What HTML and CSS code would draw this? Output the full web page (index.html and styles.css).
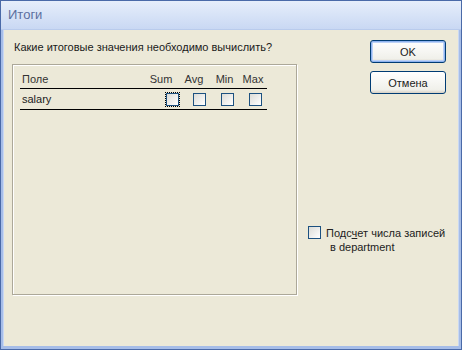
FILE: index.html
```html
<!DOCTYPE html>
<html lang="ru">
<head>
  <meta charset="UTF-8" />
  <title>Итоги</title>
  <link rel="stylesheet" href="styles.css">
</head>
<body>
  <div class="window">
    <div class="titlebar">Итоги</div>
    <div class="client">
      <div class="main">
        <p class="prompt">Какие итоговые значения необходимо вычислить?</p>
        <div class="panel">
          <div class="grid head">
            <span class="field">Поле</span>
            <span>Sum</span>
            <span>Avg</span>
            <span>Min</span>
            <span>Max</span>
          </div>
          <div class="grid row">
            <span class="field">salary</span>
            <span><i class="check focus"></i></span>
            <span><i class="check"></i></span>
            <span><i class="check"></i></span>
            <span><i class="check"></i></span>
          </div>
        </div>
      </div>
      <div class="side">
        <button class="btn default">OK</button>
        <button class="btn">Отмена</button>
        <label class="count">
          <i class="check"></i>
          <span>Подс<u>ч</u>ет числа записей<br><span class="indent">в department</span></span>
        </label>
      </div>
    </div>
  </div>
</body>
</html>
```

FILE: styles.css
```css
body {
  margin: 0;
  padding: 0;
  font-family: 'Liberation Sans', Arial, sans-serif;
  font-size: 11px;
  color: #000;
  background: #ece9d8;
}

.window {
  width: 462px;
  height: 350px;
  box-sizing: border-box;
  display: flex;
  flex-direction: column;
  background: #ece9d8;
  border: 3px solid #a6bde8;
  border-top: none;
  border-bottom: 4px solid #a6bde8;
  box-shadow: inset 1px 0 0 #c9d8f3, inset -1px 0 0 #c9d8f3;
  outline: 1px solid #4a6aa8;
  outline-offset: -1px;
}

.titlebar {
  height: 29px;
  margin: 0 -3px;
  padding-left: 8px;
  line-height: 30px;
  font-size: 13px;
  color: #5b6f9e;
  background: linear-gradient(to bottom, #e7effb, #c9d8f3);
  border-bottom: 1px solid #b9cbec;
}

.client {
  flex: 1;
  display: flex;
  padding: 10px 0 0 9px;
}

.main {
  width: 285px;
}

.prompt {
  margin: 1px 0 10px 2px;
  font-size: 11px;
  line-height: 13px;
  color: #1a1a1a;
}

.panel {
  height: 231px;
  box-sizing: border-box;
  border: 1px solid #aca899;
  box-shadow: inset 1px 1px 0 #fff, 1px 1px 0 #fff;
  padding: 5px 0 0 7px;
}

.grid {
  width: 247px;
  display: grid;
  align-items: center;
  border-bottom: 1px solid #000;
  color: #222;
}

.head {
  height: 18px;
  grid-template-columns: 124px 34px 32px 29px 28px;
  color: #333;
}

.head span {
  text-align: center;
}

.grid .field {
  text-align: left;
  padding-left: 2px;
}

.row {
  height: 20px;
  grid-template-columns: 146px 27px 28px 28px 18px;
}

.row span {
  display: flex;
  align-items: center;
}

.check {
  display: inline-block;
  width: 11px;
  height: 11px;
  border: 1px solid #1c5180;
  background: linear-gradient(135deg, #dcdcd7, #fff);
}

.check.focus {
  outline: 1px dotted #000;
  outline-offset: 0;
}

.side {
  flex: 1;
  display: flex;
  flex-direction: column;
  align-items: flex-start;
  padding-top: 0;
}

.btn {
  width: 76px;
  height: 23px;
  margin-left: 73px;
  margin-bottom: 8px;
  font-family: inherit;
  font-size: 11px;
  font-weight: normal;
  color: #1a1a1a;
  border: 1px solid #003c74;
  border-radius: 3px;
  background: linear-gradient(to bottom, #fff, #f0f0ea 85%, #d6d0c5);
  padding: 0;
}

.btn.default {
  box-shadow: inset 0 0 0 1px #8eb3f0, inset 0 0 0 2px #bdd2f6;
}

.count {
  display: flex;
  align-items: flex-start;
  gap: 5px;
  margin-top: 124px;
  margin-left: 11px;
  line-height: 14px;
  color: #222;
}

.count .indent {
  padding-left: 4px;
}

.count u {
  text-decoration: underline;
}
```
